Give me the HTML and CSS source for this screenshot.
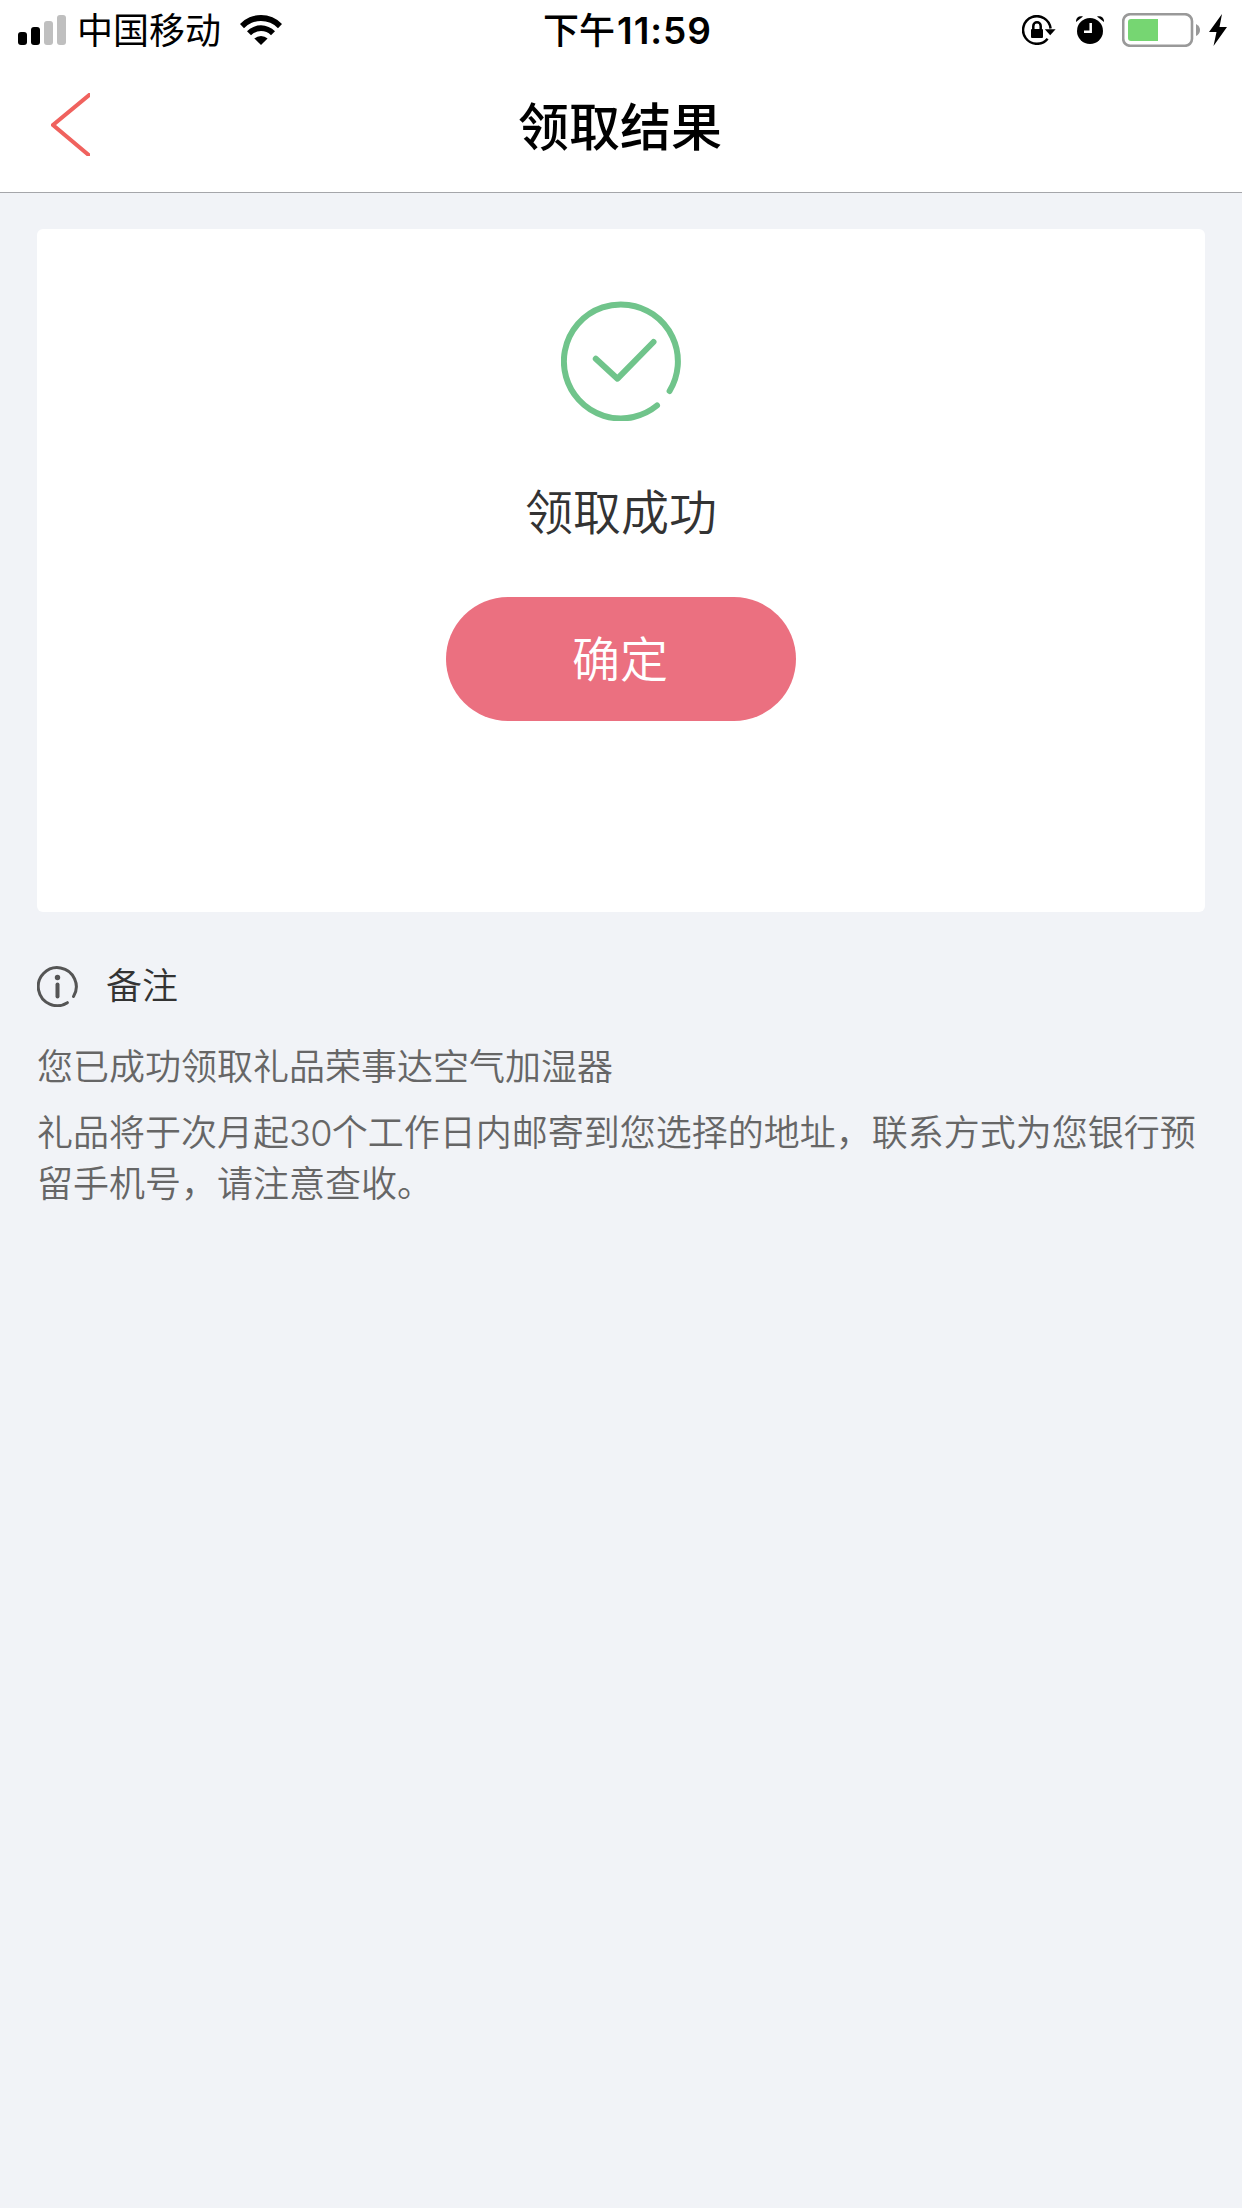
FILE: index.html
```html
<!DOCTYPE html>
<html lang="zh-CN">
<head>
    <meta charset="UTF-8">
    <meta name="viewport" content="width=device-width, initial-scale=1.0">
    <title>领取结果</title>
    <link rel="stylesheet" href="styles.css">
</head>
<body>
    <header class="header">
        <div class="status-bar">
            <div class="status-left">
                <svg class="signal" width="48" height="30" viewBox="0 0 48 30">
                    <rect x="0" y="17" width="9" height="13" rx="3"/>
                    <rect x="13" y="12" width="9" height="18" rx="3"/>
                    <rect class="off" x="26" y="6" width="9" height="24" rx="3"/>
                    <rect class="off" x="39" y="0" width="9" height="30" rx="3"/>
                </svg>
                <span class="carrier">中国移动</span>
                <svg class="wifi" width="42" height="30" viewBox="0 0 42 30">
                    <path d="M0 9A29 29 0 0 1 42 9L38 13.2A23.5 23.5 0 0 0 4 13.2Z"/>
                    <path d="M7 16.3A19.5 19.5 0 0 1 35 16.3L31 20.3A14 14 0 0 0 11 20.3Z"/>
                    <path d="M14.4 23.6A9.5 9.5 0 0 1 27.6 23.6L21 30Z"/>
                </svg>
            </div>
            <div class="time">下午<span class="digits">11:59</span></div>
            <div class="status-right">
                <svg class="rotation-lock" width="34" height="30" viewBox="0 0 34 30">
                    <path class="ring" d="M25.6 23.7A13.8 13.8 0 1 1 28.6 13.5"/>
                    <path d="M22.8 14.2H33.6L28.2 20.3Z"/>
                    <rect x="9" y="14" width="12" height="9" rx="1"/>
                    <path class="shackle" d="M11.3 14.5V11A3.7 3.7 0 0 1 18.7 11V14.5"/>
                </svg>
                <svg class="alarm" width="28" height="30" viewBox="0 0 28 30">
                    <path d="M0 7C-0.3 2.5 2.7 0.4 7 1.4Z"/>
                    <path d="M28 7C28.3 2.5 25.3 0.4 21 1.4Z"/>
                    <circle cx="14" cy="16" r="13"/>
                    <path class="hands" d="M14.7 8V16.7H8"/>
                </svg>
                <svg class="battery" width="79" height="34" viewBox="0 0 79 34">
                    <rect class="frame" x="1.2" y="1.2" width="68.8" height="31.6" rx="7"/>
                    <path class="level" d="M9 6H36V28H9Q6 28 6 25V9Q6 6 9 6Z"/>
                    <path class="cap" d="M74 11Q78 13 78 17T74 23Z"/>
                </svg>
                <svg class="bolt" width="18" height="32" viewBox="0 0 18 32">
                    <path d="M13 0L0 18H7.5L4.5 32L18 13H10.5Z"/>
                </svg>
            </div>
        </div>
        <div class="nav-bar">
            <a class="back" href="#" aria-label="返回">
                <svg width="39" height="63" viewBox="0 0 39 63">
                    <path d="M40 0.5L2 32L40 64"/>
                </svg>
            </a>
            <h1 class="title">领取结果</h1>
        </div>
    </header>

    <main class="content">
        <section class="card">
            <svg class="success-icon" width="120" height="120" viewBox="0 0 120 120">
                <path d="M108.6 90A57 57 0 1 0 96 104.5"/>
                <path d="M34.8 57.7L56.5 77.7L92.5 41"/>
            </svg>
            <p class="result">领取成功</p>
            <button class="confirm" type="button">确定</button>
        </section>

        <section class="remark">
            <div class="remark-head">
                <svg class="info-icon" width="41" height="41" viewBox="0 0 41 41">
                    <path d="M36.5 30.5A19 19 0 1 0 30.4 36.7"/>
                    <path class="stem" d="M20.5 18.5V30.5"/>
                    <circle cx="20.5" cy="11.5" r="2.7"/>
                </svg>
                <h2>备注</h2>
            </div>
            <p>您已成功领取礼品荣事达空气加湿器</p>
            <p>礼品将于次月起<span class="num">30</span>个工作日内邮寄到您选择的地址，联系方式为您银行预留手机号，请注意查收。</p>
        </section>
    </main>
</body>
</html>
```

FILE: styles.css
```css
* {
    box-sizing: border-box;
}
body {
    margin: 0;
    min-height: 100vh;
    background-color: #f1f3f7;
    color: #333;
    font-family: "Noto Sans CJK SC", sans-serif;
    font-weight: 350;
}
svg {
    display: block;
    flex: none;
}
.header {
    height: 193px;
    background-color: #fff;
    border-bottom: 1px solid #a5a6aa;
}
.status-bar {
    display: grid;
    grid-template-columns: 1fr auto 1fr;
    align-items: center;
    height: 60px;
    padding: 0 15px 0 18px;
    color: #000;
    font-size: 36px;
    line-height: 54px;
}
.status-left,
.status-right {
    display: flex;
    align-items: center;
    height: 60px;
}
.status-right {
    justify-content: flex-end;
}
.signal,
.wifi,
.rotation-lock,
.alarm,
.battery,
.bolt {
    margin-bottom: 1px;
}
.carrier {
    margin: 0 19px 4px 11px;
    font-weight: 400;
}
.time {
    margin: 0 0 4px 10px;
    font-weight: 500;
}
.digits {
    margin-left: 2px;
    font-family: Inter, sans-serif;
    font-size: 37px;
    font-weight: 600;
    line-height: 1;
    letter-spacing: 1px;
}
.signal .off {
    fill: #bfbfbf;
}
.ring,
.shackle {
    fill: none;
    stroke: #000;
    stroke-width: 2.5;
}
.alarm {
    margin-left: 20px;
}
.hands {
    fill: none;
    stroke: #fff;
    stroke-width: 2.5;
}
.battery {
    margin-left: 18px;
    margin-bottom: 0;
}
.frame {
    fill: none;
    stroke: #999;
    stroke-width: 2.6;
}
.level {
    fill: #76d672;
}
.cap {
    fill: #999;
}
.bolt {
    margin-left: 8px;
}
.nav-bar {
    display: grid;
    grid-template-columns: 1fr auto 1fr;
    align-items: center;
    height: 132px;
    padding: 0 53px 3px 51px;
}
.back path {
    fill: none;
    stroke: #f0625e;
    stroke-width: 4;
}
.title {
    margin: 0 0 2px;
    color: #000;
    font-size: 51px;
    font-weight: 500;
    line-height: 72px;
}
.content {
    padding: 36px 37px;
}
.card {
    display: flex;
    flex-direction: column;
    align-items: center;
    height: 683px;
    padding-top: 72px;
    background-color: #fff;
    border-radius: 6px;
}
.success-icon path {
    fill: none;
    stroke: #70c48b;
    stroke-width: 6;
    stroke-linecap: round;
    stroke-linejoin: round;
}
.result {
    margin: 51px 0;
    font-size: 48px;
    line-height: 74px;
}
.confirm {
    width: 350px;
    height: 124px;
    padding: 0 2px 7px 0;
    border: 0;
    border-radius: 62px;
    background-color: #eb7080;
    color: #fff;
    font-family: inherit;
    font-size: 48px;
    font-weight: inherit;
}
.remark {
    padding-top: 48px;
    color: #666;
    font-size: 36px;
    line-height: 51px;
}
.remark-head {
    display: flex;
    align-items: center;
    gap: 28px;
    height: 52px;
    margin-bottom: 27px;
}
.remark-head h2 {
    margin: 0 0 5px;
    color: #333;
    font-size: 36px;
    font-weight: inherit;
}
.remark p {
    margin: 0 0 15px;
}
.info-icon path {
    fill: none;
    stroke: #555;
    stroke-width: 3;
    stroke-linecap: round;
}
.info-icon .stem {
    stroke-width: 4;
}
.info-icon circle {
    fill: #555;
}
.num {
    font-family: Inter, sans-serif;
    font-weight: 300;
    line-height: 1;
    letter-spacing: -0.7px;
}
```
